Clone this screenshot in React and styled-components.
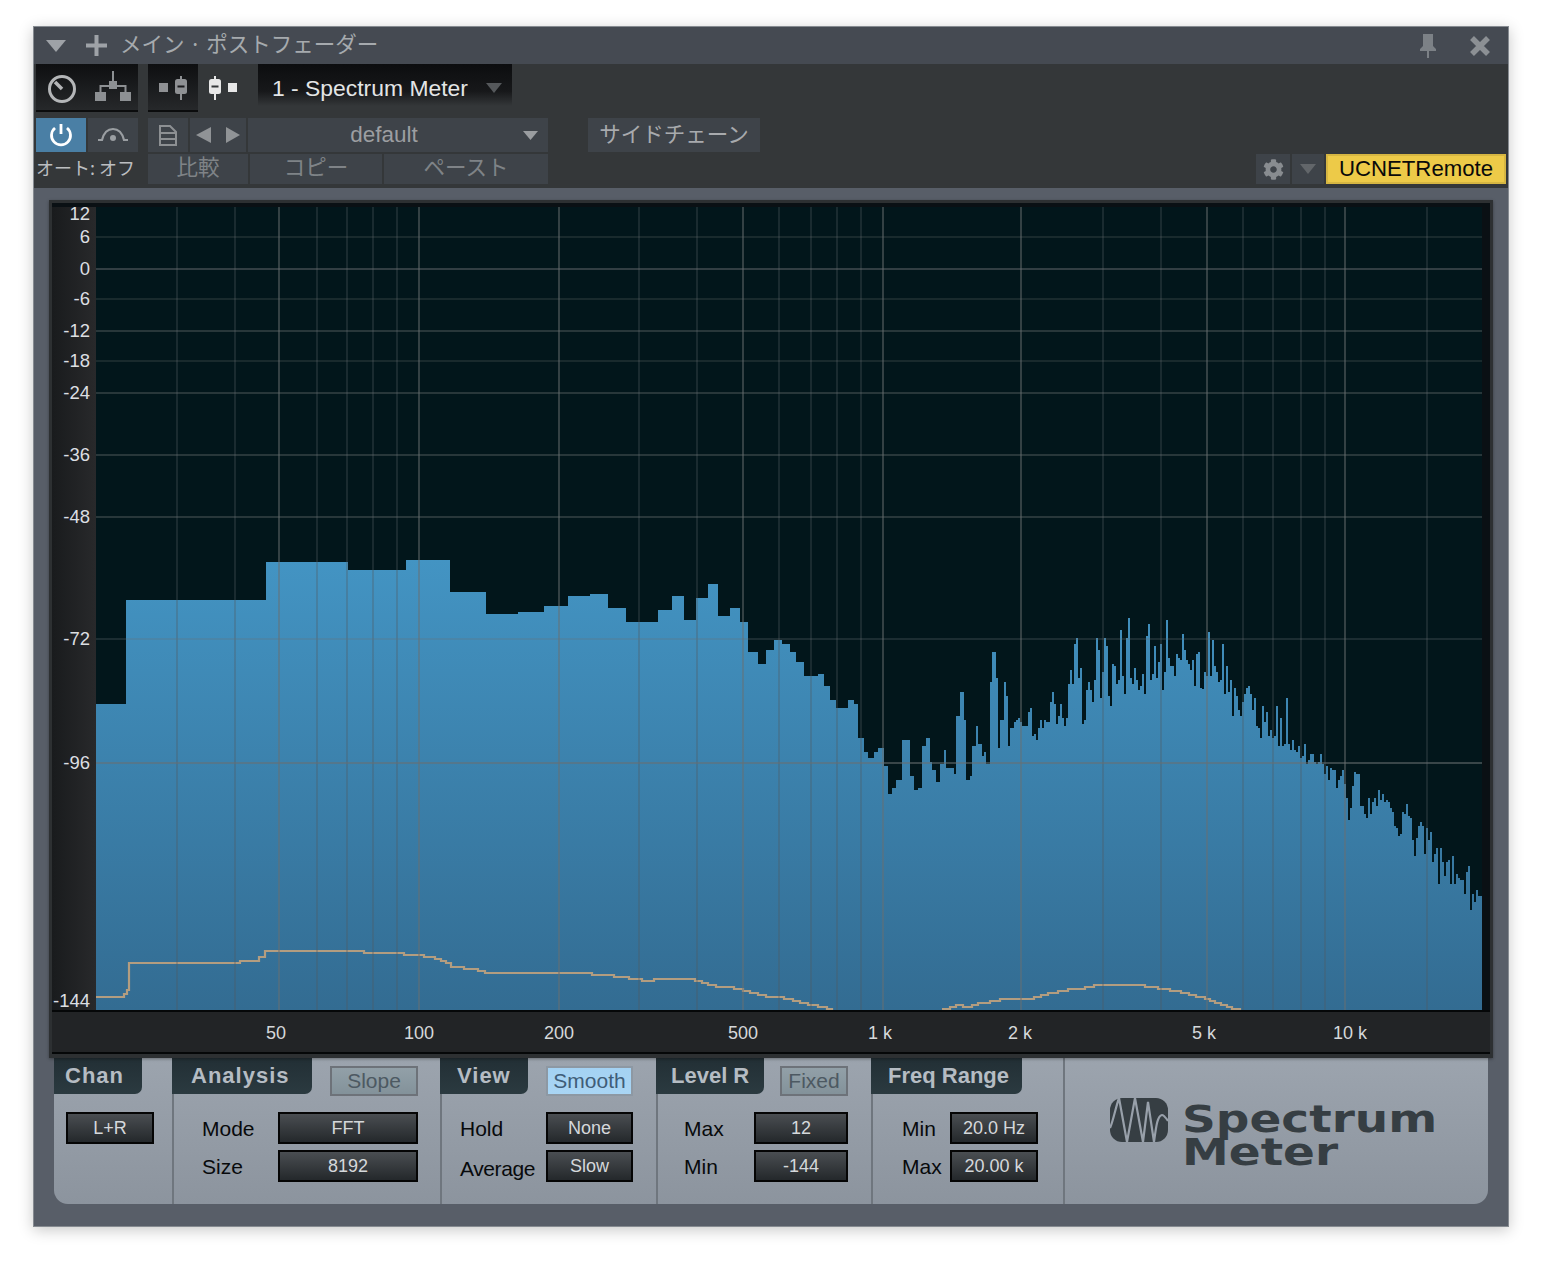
import React from "react";
import styled, { createGlobalStyle } from "styled-components";
import { FaCog } from "react-icons/fa";

const STEPS = [
  [126, 704], [266, 600], [348, 562], [406, 570], [450, 560], [486, 592], [518, 614], [544, 612], [568, 606], [590, 596],
  [608, 594], [626, 608], [658, 622], [672, 610], [684, 596], [696, 620], [708, 598], [718, 584], [730, 616], [740, 608],
  [748, 622], [758, 652], [766, 664], [774, 650], [782, 640], [790, 644], [796, 652], [804, 662], [818, 676], [824, 674],
  [830, 686], [836, 700], [848, 708], [854, 700], [858, 704], [864, 738], [868, 752], [874, 758], [878, 752], [884, 748],
  [888, 766], [892, 794], [896, 788], [902, 780], [910, 740], [914, 776], [918, 790], [922, 788], [926, 746], [930, 738],
  [932, 762], [936, 770], [940, 782], [944, 764], [946, 750], [954, 768], [956, 774], [960, 716], [964, 692], [966, 720],
  [970, 780], [972, 776], [976, 746], [978, 726], [982, 744], [984, 756], [986, 752], [990, 764], [992, 682], [996, 652],
  [998, 678], [1000, 748], [1004, 720], [1006, 682], [1008, 696], [1010, 746], [1014, 728], [1016, 722], [1018, 720],
  [1020, 718], [1022, 722], [1028, 726],
];

const BARS = [
  712, 708, 736, 734, 740, 728, 720, 728, 720, 722, 722, 702, 692, 704, 724, 716, 704, 718, 726, 718, 684, 670, 684, 644, 638,
  678, 668, 724, 720, 690, 682, 690, 702, 680, 638, 650, 698, 672, 638, 646, 696, 706, 664, 666, 684, 680, 630, 676, 694, 638,
  618, 678, 684, 668, 680, 690, 686, 674, 694, 636, 624, 680, 674, 646, 678, 662, 644, 690, 672, 620, 658, 666, 666, 676, 654,
  658, 660, 634, 650, 660, 664, 670, 660, 686, 654, 652,
  688, 689, 672, 676, 632, 676, 640, 666, 672, 682, 680, 644, 694, 666, 692, 680, 716, 688, 696, 710, 716, 702, 694, 688, 686,
  694, 710, 698, 726, 728, 738, 706, 722, 712, 736, 730, 738, 736, 706, 746, 718, 746, 744, 698, 744, 750, 740, 750, 752, 746,
  758, 756, 744, 764, 760, 754, 754, 762, 764, 762, 754, 764, 774, 766, 780, 768, 770, 770, 788, 780, 776, 770, 784, 798, 820,
  808, 786, 772, 774, 774, 806, 806, 814, 818, 798, 814, 802, 798, 806, 790, 800, 794, 802, 800, 802, 808, 812, 826, 828, 836,
  834, 812, 814, 804, 816, 818, 840, 856, 838, 826, 822, 826, 854, 828, 840, 832, 862, 854, 848, 884, 848, 862, 876, 862, 860,
  884, 856, 884, 874, 878, 880, 880, 894, 872, 866, 910, 894, 902, 890, 896, 896,
];

const PEAK_LEFT = [
  [96, 997], [121, 997], [124, 994], [127, 990], [129, 963], [238, 963], [240, 961], [255, 961], [259, 957], [265, 951], [361, 951],
  [364, 953], [403, 953], [404, 955], [422, 955], [424, 957], [435, 959], [441, 961], [446, 963], [451, 967], [464, 969], [478, 971],
  [485, 973], [590, 973], [592, 975], [614, 977], [629, 979], [642, 981], [654, 979], [695, 979], [695, 981], [702, 983], [708, 985],
  [716, 987], [734, 989], [743, 991], [750, 993], [758, 995], [766, 997], [784, 999], [793, 1001], [800, 1003], [808, 1005], [818, 1007],
  [827, 1009], [832, 1011],
];

const PEAK_RIGHT = [
  [942, 1009], [950, 1007], [956, 1005], [963, 1007], [972, 1005], [978, 1003], [990, 1001], [1000, 999], [1034, 997], [1041, 995],
  [1048, 993], [1058, 991], [1068, 989], [1085, 987], [1094, 985], [1145, 987], [1158, 989], [1170, 991], [1181, 993], [1189, 995],
  [1196, 997], [1205, 999], [1210, 1001], [1215, 1003], [1221, 1005], [1227, 1007], [1232, 1009], [1240, 1011],
];

const MAJOR_X = [279, 419, 559, 743, 883, 1021, 1207, 1345];
const MINOR_X = [177, 235, 317, 347, 373, 397, 639, 697, 779, 811, 837, 861, 1103, 1161, 1243, 1273, 1301, 1325, 1427];
const H_LINES = [
  [237, 0.3], [269, 0.62], [299, 0.3], [331, 0.5], [361, 0.3], [393, 0.5], [455, 0.5], [517, 0.5], [639, 0.35], [763, 0.72],
];

const Y_LABELS = [
  ["12", 214], ["6", 237], ["0", 269], ["-6", 299], ["-12", 331], ["-18", 361], ["-24", 393], ["-36", 455], ["-48", 517],
  ["-72", 639], ["-96", 763], ["-144", 1001],
];
const X_LABELS = [
  ["50", 276], ["100", 419], ["200", 559], ["500", 743], ["1 k", 880], ["2 k", 1020], ["5 k", 1204], ["10 k", 1350],
];

const spectrumPath = () => {
  let d = "M96,1010";
  STEPS.forEach(([x, y]) => {
    d += `V${y}H${x}`;
  });
  const w = (1482 - 1028) / BARS.length;
  BARS.forEach((y, i) => {
    d += `V${y}H${(1028 + w * (i + 1)).toFixed(2)}`;
  });
  return d + "V1010Z";
};

const stepPath = (points) =>
  points.map(([x, y], i) => (i === 0 ? `M${x},${y}` : `H${x}V${y}`)).join("");

const Triangle = ({ dir = "down", w = 16, h = 10, color }) => {
  const pts = {
    down: `0,0 ${w},0 ${w / 2},${h}`,
    left: `${w},0 ${w},${h} 0,${h / 2}`,
    right: `0,0 ${w},${h / 2} 0,${h}`,
  };
  return (
    <svg width={w} height={h} viewBox={`0 0 ${w} ${h}`}>
      <polygon points={pts[dir]} fill={color} />
    </svg>
  );
};

const StripIcon = ({ flip, color, inner }) => (
  <svg width="28" height="24" viewBox="0 0 28 24">
    <g transform={flip ? "translate(28,0) scale(-1,1)" : undefined}>
      <rect x="0" y="7" width="9" height="9" fill={color} />
      <rect x="21" y="0" width="2" height="24" fill={color} />
      <rect x="16" y="3" width="12" height="15" rx="2.5" fill={color} />
      <rect x="18.5" y="9.5" width="7" height="2" fill={inner} />
    </g>
  </svg>
);

const Logo = () => (
  <svg width="58" height="44" viewBox="0 0 58 44">
    <rect x="0" y="0" width="58" height="44" rx="12" fill="#363e43" />
    <path
      d="M0,30 C3,24 6,8 9,0 M9,0 L17,44 L25,0 L33,44 L38,4 L44,44 C46,30 47,18 52,17 C54,17 56,20 58,23"
      fill="none"
      stroke="#98a0aa"
      strokeWidth="2.2"
    />
  </svg>
);

const App = () => (
  <>
    <GlobalStyle />
    <Page>
      <Win>
        <TitleBar>
          <Triangle w={20} h={12} color="#9ea2a7" />
          <svg width="21" height="21" viewBox="0 0 21 21">
            <path d="M8.5 0h4v8.500h8.500v4h-8.500v8.500h-4v-8.500h-8.500v-4h8.500z" fill="#9ea2a7" />
          </svg>
          <TitleText>メイン · ポストフェーダー</TitleText>
          <TitleIcons>
            <svg width="16" height="24" viewBox="0 0 16 24">
              <path d="M3 0h10v12l3 3v2H9v7H7v-7H0v-2l3-3z" fill="#7c8186" />
            </svg>
            <svg width="20" height="20" viewBox="0 0 20 20">
              <path d="M2 2l16 16M18 2L2 18" stroke="#8c9094" strokeWidth="5.500" />
            </svg>
          </TitleIcons>
        </TitleBar>

        <Toolbar>
          <TopRow>
            <DarkGroup>
              <DarkBtn $w={51} $pt={3}>
                <svg width="30" height="30" viewBox="0 0 30 30">
                  <circle cx="15" cy="15" r="12.500" fill="none" stroke="#b4b6b8" strokeWidth="3" />
                  <path d="M15 15L8 8" stroke="#b4b6b8" strokeWidth="3.500" />
                </svg>
              </DarkBtn>
              <DarkBtn $w={51} $pb={3}>
                <svg width="36" height="30" viewBox="0 0 36 30">
                  <g fill="#8d9093">
                    <rect x="17" y="0" width="2" height="12" />
                    <rect x="14" y="10" width="8" height="8" />
                    <rect x="0" y="21" width="11" height="9" />
                    <rect x="25" y="21" width="11" height="9" />
                  </g>
                  <path d="M5.500 21v-6h25v6" fill="none" stroke="#8d9093" strokeWidth="2" />
                </svg>
              </DarkBtn>
            </DarkGroup>
            <StripGroup>
              <DarkBtn $w={50} $pt={2}>
                <StripIcon color="#8f9194" inner="#1a1b1d" />
              </DarkBtn>
              <StripBtn>
                <StripIcon flip color="#e8e8e8" inner="#343739" />
              </StripBtn>
            </StripGroup>
            <NameBox>
              <span>1 - Spectrum Meter</span>
              <Triangle w={16} h={10} color="#55585b" />
            </NameBox>
          </TopRow>

          <MidRow>
            <PowerBtn>
              <svg width="24" height="24" viewBox="0 0 24 24" fill="none" stroke="#fff" strokeWidth="2.800">
                <path d="M12 1v10" />
                <path d="M18 5a9.500 9.500 0 1 1-12 0" />
              </svg>
            </PowerBtn>
            <ToolBtn $w={50}>
              <svg width="30" height="16" viewBox="0 0 30 16" fill="none" stroke="#9a9ea2" strokeWidth="2.200">
                <path d="M0 13h4C6 5 10 2 15 2s9 3 11 11h4" />
                <circle cx="15" cy="11" r="3" fill="#9a9ea2" stroke="none" />
              </svg>
            </ToolBtn>
            <ToolBtn $w={40} $ml={8}>
              <svg width="18" height="21" viewBox="0 0 18 21" fill="none" stroke="#8d9093" strokeWidth="2">
                <path d="M1 1h10l6 6v13H1z" />
                <path d="M1 8h16M1 14h16" />
              </svg>
            </ToolBtn>
            <ToolBtn $w={56} $gap={15}>
              <Triangle dir="left" w={15} h={16} color="#909396" />
              <Triangle dir="right" w={14} h={16} color="#909396" />
            </ToolBtn>
            <PresetBtn>
              default
              <PresetCaret>
                <Triangle w={15} h={9} color="#9a9da0" />
              </PresetCaret>
            </PresetBtn>
            <SideChain>サイドチェーン</SideChain>
          </MidRow>

          <BottomRow>
            <AutoLabel>オート: オフ</AutoLabel>
            <TextBtn $w={100} $ml={8}>比較</TextBtn>
            <TextBtn $w={132}>コピー</TextBtn>
            <TextBtn $w={164}>ペースト</TextBtn>
            <GearBtn>
              <FaCog size={21} color="#888c90" />
            </GearBtn>
            <ToolBtn $w={32}>
              <Triangle w={16} h={10} color="#62666a" />
            </ToolBtn>
            <Remote>UCNETRemote</Remote>
          </BottomRow>
        </Toolbar>

        <Body>
          <Display>
            <PlotRow>
              <YAxis>
                {Y_LABELS.map(([text, y]) => (
                  <YLabel key={text} style={{ top: y - 207 }}>{text}</YLabel>
                ))}
              </YAxis>
              <Plot viewBox="96 207 1386 803" width="1386" height="803">
                <defs>
                  <linearGradient id="spec" gradientUnits="userSpaceOnUse" x1="0" y1="560" x2="0" y2="1010">
                    <stop offset="0" stopColor="#4394c3" />
                    <stop offset="1" stopColor="#336c92" />
                  </linearGradient>
                </defs>
                <path d={spectrumPath()} fill="url(#spec)" shapeRendering="crispEdges" />
                <path d={stepPath(PEAK_LEFT)} fill="none" stroke="#b39d80" strokeWidth="2.200" />
                <path d={stepPath(PEAK_RIGHT)} fill="none" stroke="#b39d80" strokeWidth="2.200" />
                {MINOR_X.map((x) => (
                  <line key={x} x1={x} x2={x} y1="207" y2="1010" stroke="#505a60" strokeOpacity="0.42" strokeWidth="1.500" />
                ))}
                {H_LINES.map(([y, o]) => (
                  <line key={y} x1="96" x2="1482" y1={y} y2={y} stroke="#6a6f72" strokeOpacity={o} strokeWidth="1.500" />
                ))}
                {MAJOR_X.map((x) => (
                  <line key={x} x1={x} x2={x} y1="207" y2="1010" stroke="#6a6f72" strokeOpacity="0.65" strokeWidth="1.500" />
                ))}
              </Plot>
            </PlotRow>
            <XAxis>
              {X_LABELS.map(([text, x]) => (
                <XLabel key={text} style={{ left: x - 52 }}>{text}</XLabel>
              ))}
            </XAxis>
          </Display>

          <Controls>
            <Section $w={118} $pr={18} $first>
              <SectionHead>
                <Tab $w={88} $pl={11} $spaced>Chan</Tab>
              </SectionHead>
              <Rows $pl={10}>
                <Row>
                  <Value $w={88}>L+R</Value>
                </Row>
              </Rows>
            </Section>

            <Section $w={268} $pr={22}>
              <SectionHead>
                <Tab $w={140} $pl={19} $spaced>Analysis</Tab>
                <Toggle $w={88}>Slope</Toggle>
              </SectionHead>
              <Rows $pl={28}>
                <Row>
                  <Label>Mode</Label>
                  <Value $w={140}>FFT</Value>
                </Row>
                <Row>
                  <Label>Size</Label>
                  <Value $w={140}>8192</Value>
                </Row>
              </Rows>
            </Section>

            <Section $w={216} $pr={23}>
              <SectionHead>
                <Tab $w={88} $pl={17} $spaced>View</Tab>
                <Toggle $w={87} $on>Smooth</Toggle>
              </SectionHead>
              <Rows $pl={18}>
                <Row>
                  <Label>Hold</Label>
                  <Value $w={87}>None</Value>
                </Row>
                <Row>
                  <Label $low>Average</Label>
                  <Value $w={87}>Slow</Value>
                </Row>
              </Rows>
            </Section>

            <Section $w={215} $pr={23}>
              <SectionHead>
                <Tab $w={108} $pl={15}>Level R</Tab>
                <Toggle $w={68}>Fixed</Toggle>
              </SectionHead>
              <Rows $pl={26}>
                <Row>
                  <Label>Max</Label>
                  <Value $w={94}>12</Value>
                </Row>
                <Row>
                  <Label>Min</Label>
                  <Value $w={94}>-144</Value>
                </Row>
              </Rows>
            </Section>

            <Section $w={192} $pr={25}>
              <SectionHead>
                <Tab $w={151} $pl={17}>Freq Range</Tab>
              </SectionHead>
              <Rows $pl={29}>
                <Row>
                  <Label>Min</Label>
                  <Value $w={88}>20.0 Hz</Value>
                </Row>
                <Row>
                  <Label>Max</Label>
                  <Value $w={88}>20.00 k</Value>
                </Row>
              </Rows>
            </Section>

            <LogoArea>
              <Logo />
              <LogoText>
                <span>Spectrum</span>
                <span>Meter</span>
              </LogoText>
            </LogoArea>
          </Controls>
        </Body>
      </Win>
    </Page>
  </>
);

export default App;

const GlobalStyle = createGlobalStyle`
  html, body {
    margin: 0;
    background: #fff;
  }
  body {
    font-family: "Liberation Sans", "Noto Sans CJK JP", sans-serif;
  }
`;

const Page = styled.div`
  width: 1542px;
  height: 1268px;
  box-sizing: border-box;
  padding: 26px 0 0 33px;
  overflow: hidden;
`;

const Win = styled.div`
  width: 1476px;
  height: 1201px;
  box-sizing: border-box;
  border: 1px solid #868b91;
  display: flex;
  flex-direction: column;
  background: #585e68;
  box-shadow: 0 3px 14px rgba(0, 0, 0, 0.22);
`;

const TitleBar = styled.div`
  height: 37px;
  flex: none;
  display: flex;
  align-items: center;
  padding: 0 18px 0 12px;
  background: #454a52;
  & > svg:first-child {
    margin-right: 20px;
  }
`;

const TitleText = styled.div`
  margin-left: 13px;
  padding-bottom: 7px;
  font-size: 21.500px;
  color: #a6aaae;
  font-family: "Noto Sans CJK JP", sans-serif;
`;

const TitleIcons = styled.div`
  margin-left: auto;
  display: flex;
  align-items: center;
  gap: 34px;
`;

const Toolbar = styled.div`
  height: 124px;
  flex: none;
  box-sizing: border-box;
  padding: 0 2px;
  background: #343739;
  display: flex;
  flex-direction: column;
`;

const TopRow = styled.div`
  display: flex;
  height: 48px;
  gap: 10px;
`;

const DarkGroup = styled.div`
  display: flex;
  background: #0c0d0e;
`;

const StripGroup = styled.div`
  display: flex;
`;

const DarkBtn = styled.div`
  width: ${(p) => p.$w}px;
  box-sizing: border-box;
  padding: ${(p) => p.$pt || 0}px 0 ${(p) => p.$pb || 0}px;
  display: flex;
  align-items: center;
  justify-content: center;
  background: linear-gradient(#0e0f11, #26282a);
  border-bottom: 2px solid #0b0c0d;
`;

const StripBtn = styled.div`
  width: 50px;
  display: flex;
  align-items: center;
  justify-content: center;
`;

const NameBox = styled.div`
  width: 254px;
  height: 42px;
  box-sizing: border-box;
  padding: 6px 10px 0 14px;
  display: flex;
  align-items: center;
  justify-content: space-between;
  background: linear-gradient(#0c0d0f, #17181a 65%, #343739);
  color: #e3e5e6;
  font-size: 22.900px;
`;

const MidRow = styled.div`
  display: flex;
  height: 34px;
  margin-top: 6px;
  gap: 2px;
`;

const PowerBtn = styled.div`
  width: 50px;
  display: flex;
  align-items: center;
  justify-content: center;
  background: #4a7fa5;
`;

const ToolBtn = styled.div`
  width: ${(p) => p.$w}px;
  margin-left: ${(p) => p.$ml || 0}px;
  gap: ${(p) => p.$gap || 0}px;
  display: flex;
  align-items: center;
  justify-content: center;
  background: #3e4349;
`;

const PresetBtn = styled.div`
  width: 300px;
  position: relative;
  box-sizing: border-box;
  padding-right: 28px;
  display: flex;
  align-items: center;
  justify-content: center;
  background: #3e4349;
  color: #9c9ea1;
  font-size: 22.500px;
`;

const PresetCaret = styled.span`
  position: absolute;
  right: 10px;
  top: 13px;
  display: flex;
`;

const SideChain = styled.div`
  width: 172px;
  margin-left: 38px;
  padding-bottom: 6px;
  box-sizing: border-box;
  display: flex;
  align-items: center;
  justify-content: center;
  background: #3e4349;
  color: #a8aaad;
  font-size: 21.500px;
  font-family: "Noto Sans CJK JP", sans-serif;
`;

const BottomRow = styled.div`
  display: flex;
  height: 30px;
  margin-top: 2px;
  gap: 2px;
`;

const AutoLabel = styled.div`
  width: 102px;
  display: flex;
  align-items: center;
  padding: 0 0 5px 0;
  box-sizing: border-box;
  color: #bcbec1;
  font-size: 18px;
  white-space: nowrap;
  font-family: "Noto Sans CJK JP", sans-serif;
`;

const TextBtn = styled(ToolBtn)`
  box-sizing: border-box;
  padding-bottom: 7px;
  color: #7f8387;
  font-size: 21.500px;
  font-family: "Noto Sans CJK JP", sans-serif;
`;

const GearBtn = styled.div`
  width: 34px;
  margin-left: auto;
  display: flex;
  align-items: center;
  justify-content: center;
  background: #3e4349;
`;

const Remote = styled.div`
  width: 180px;
  box-sizing: border-box;
  display: flex;
  align-items: center;
  justify-content: center;
  background: #edca48;
  border: 2px solid #d6b642;
  color: #0a0a0a;
  font-size: 22.200px;
`;

const Body = styled.div`
  flex: 1;
  padding: 12px 15px 0 15px;
`;

const Display = styled.div`
  width: 1444px;
  box-sizing: border-box;
  border: 3px solid #2d3032;
  border-bottom-width: 4px;
  background: #0a1014;
  position: relative;
  box-shadow: 0 1px 3px rgba(0, 0, 0, 0.35);
`;

const PlotRow = styled.div`
  display: flex;
  padding: 4px 8px 0 0;
`;

const YAxis = styled.div`
  width: 44px;
  height: 803px;
  position: relative;
  background: linear-gradient(90deg, #191b1d, #28292b);
`;

const YLabel = styled.span`
  position: absolute;
  right: 6px;
  transform: translateY(-50%);
  color: #dcdfe2;
  font-size: 18.500px;
  line-height: 1;
`;

const Plot = styled.svg`
  display: block;
  flex: none;
  background: #02161b;
`;

const XAxis = styled.div`
  height: 44px;
  box-sizing: border-box;
  position: relative;
  border-top: 2px solid #050708;
  border-bottom: 2px solid #050708;
  background: #222426;
`;

const XLabel = styled.span`
  position: absolute;
  top: 21px;
  transform: translate(-50%, -50%);
  color: #d5d8da;
  font-size: 18px;
  line-height: 1;
  white-space: nowrap;
`;

const Controls = styled.div`
  margin: 0 5px;
  height: 146px;
  display: flex;
  border-radius: 0 0 14px 14px;
  background: linear-gradient(#9ca4ae, #8c949e);
  overflow: hidden;
`;

const Section = styled.div`
  width: ${(p) => p.$w}px;
  box-sizing: border-box;
  flex: none;
  padding-right: ${(p) => p.$pr}px;
  border-left: 2px solid ${(p) => (p.$first ? "transparent" : "#6f767e")};
`;

const SectionHead = styled.div`
  height: 54px;
  display: flex;
  align-items: flex-start;
`;

const Tab = styled.div`
  width: ${(p) => p.$w}px;
  height: 36px;
  flex: none;
  box-sizing: border-box;
  margin-left: -2px;
  padding-left: ${(p) => p.$pl}px;
  display: flex;
  align-items: center;
  border-radius: 0 0 7px 0;
  background: linear-gradient(#222f35, #2b3a40);
  color: #b5bcc3;
  font-size: 22px;
  font-weight: bold;
  letter-spacing: ${(p) => (p.$spaced ? 1 : 0)}px;
`;

const Toggle = styled.div`
  width: ${(p) => p.$w}px;
  height: 30px;
  margin: 8px 0 0 auto;
  box-sizing: border-box;
  display: flex;
  align-items: center;
  justify-content: center;
  border: 2px solid ${(p) => (p.$on ? "#8d98a3" : "#6d7279")};
  background: ${(p) => (p.$on ? "linear-gradient(#a4d2f3, #a9d5f4)" : "linear-gradient(#92a0a8, #83929a)")};
  color: ${(p) => (p.$on ? "#3f5d78" : "#4d5962")};
  font-size: 21px;
`;

const Rows = styled.div`
  display: flex;
  flex-direction: column;
  gap: 6px;
  padding-left: ${(p) => p.$pl}px;
`;

const Row = styled.div`
  height: 32px;
  display: flex;
  align-items: center;
  justify-content: space-between;
`;

const Label = styled.span`
  padding-top: ${(p) => (p.$low ? 6 : 2)}px;
  color: #080a0c;
  font-size: 21px;
  letter-spacing: ${(p) => (p.$low ? -0.4 : 0)}px;
`;

const Value = styled.div`
  width: ${(p) => p.$w}px;
  height: 32px;
  margin-left: auto;
  box-sizing: border-box;
  display: flex;
  align-items: center;
  justify-content: center;
  border: 2px solid #050505;
  background: linear-gradient(#4a4e52, #24282b);
  color: #d5d8db;
  font-size: 18px;
`;

const LogoArea = styled.div`
  flex: 1;
  display: flex;
  align-items: flex-start;
  gap: 14px;
  padding: 40px 0 0 45px;
  border-left: 2px solid #6f767e;
`;

const LogoText = styled.div`
  display: flex;
  flex-direction: column;
  padding-top: 5px;
  color: #363e43;
  font-family: "DejaVu Sans", sans-serif;
  font-weight: bold;
  font-size: 37px;
  line-height: 33px;
  transform: scaleX(1.27);
  transform-origin: left top;
`;
